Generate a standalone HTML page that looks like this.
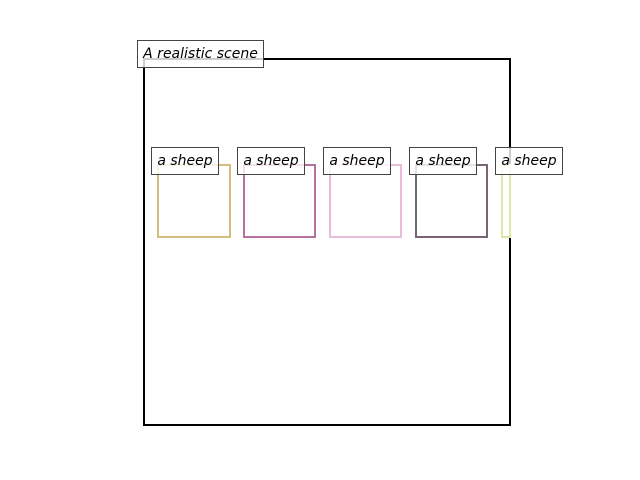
<!DOCTYPE html><html><head><style>
body{margin:0;width:640px;height:480px;background:#fff;position:relative;overflow:hidden;font-family:"DejaVu Sans",sans-serif;font-style:italic;font-size:14px}
div{position:absolute;box-sizing:border-box}
.b{border:2px solid}
.l{border:1px solid #444;background:rgba(255,255,255,0.8);height:28px;line-height:26px;text-align:center;color:#000}
</style></head><body>
<div class="b" style="left:143px;top:58px;width:368px;height:368px;border-color:#000"></div>
<div class="b" style="left:157px;top:164px;width:74px;height:74px;border-color:#d4bf80"></div>
<div class="b" style="left:243px;top:164px;width:73px;height:74px;border-color:#b8709e"></div>
<div class="b" style="left:329px;top:164px;width:73px;height:74px;border-color:#e6bcd8"></div>
<div class="b" style="left:415px;top:164px;width:73px;height:74px;border-color:#786474"></div>
<div class="b" style="left:501px;top:164px;width:10px;height:74px;border-color:#dde8a4"></div>
<div class="l" style="left:137px;top:40px;width:127px">A realistic scene</div>
<div class="l" style="left:151px;top:147px;width:68px">a sheep</div>
<div class="l" style="left:237px;top:147px;width:68px">a sheep</div>
<div class="l" style="left:323px;top:147px;width:68px">a sheep</div>
<div class="l" style="left:409px;top:147px;width:68px">a sheep</div>
<div class="l" style="left:495px;top:147px;width:68px">a sheep</div>
</body></html>
